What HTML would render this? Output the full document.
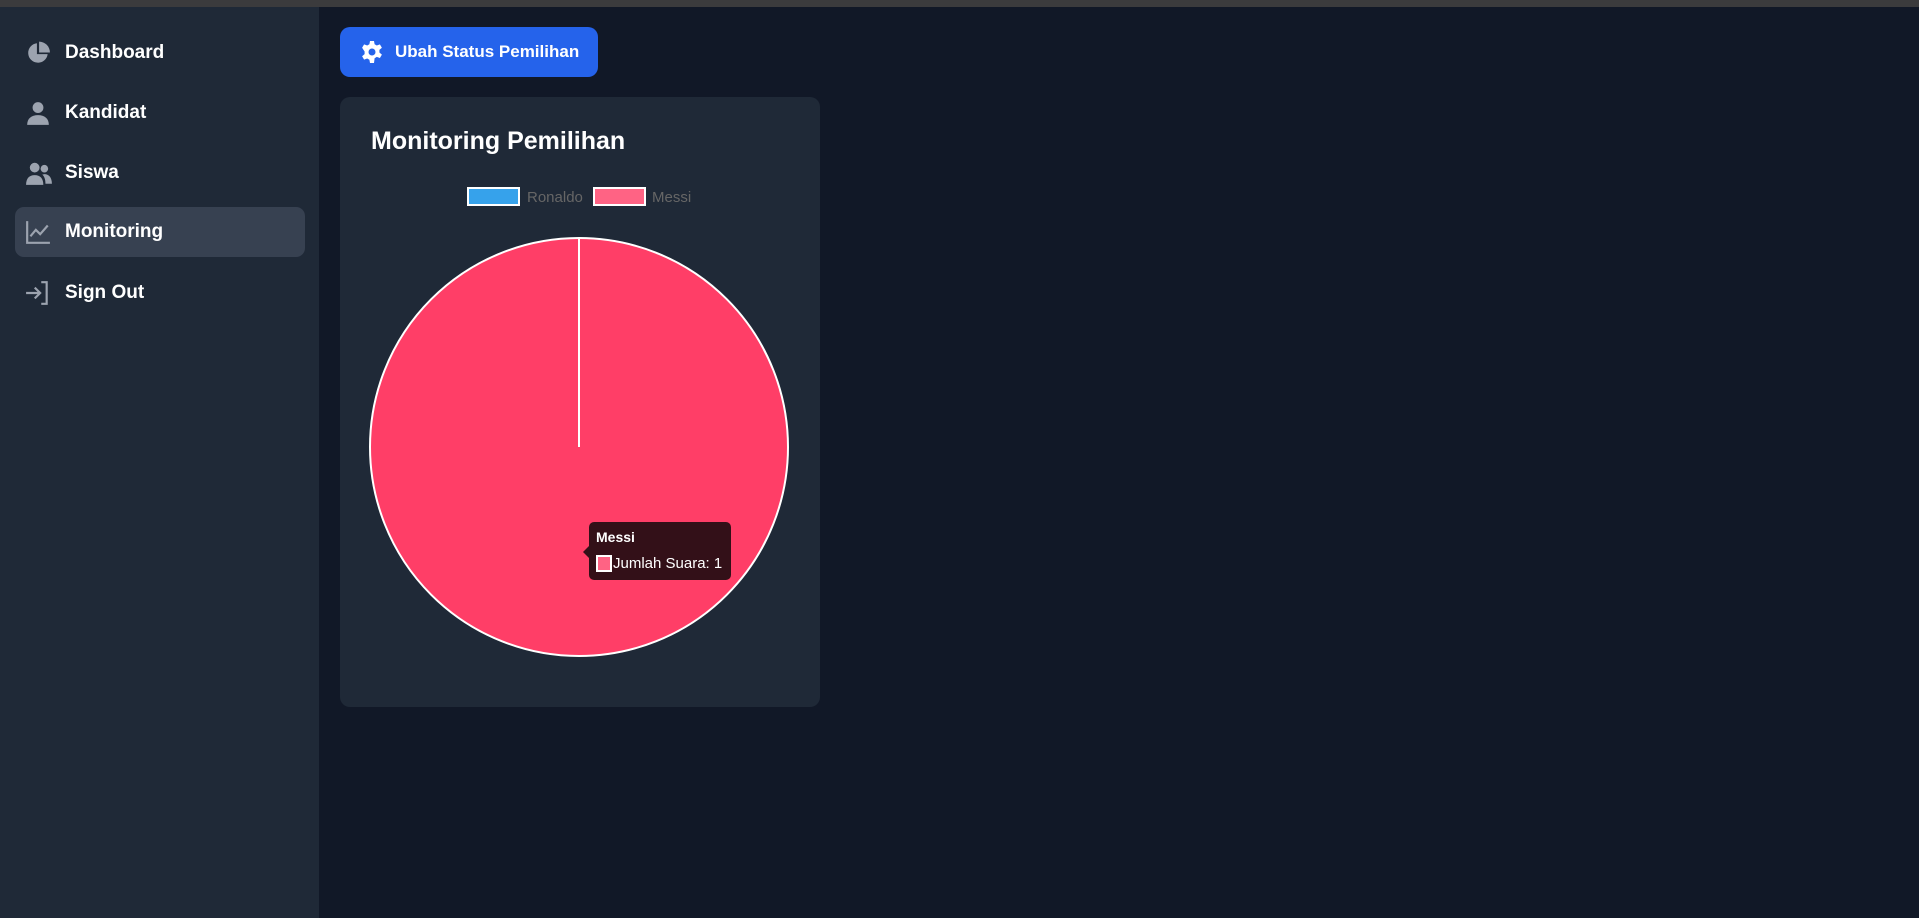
<!DOCTYPE html>
<html><head><meta charset="utf-8"><style>
*{margin:0;padding:0;box-sizing:border-box}
body{width:1919px;height:918px;background:#111827;font-family:"Liberation Sans",sans-serif;position:relative;overflow:hidden}
.top{position:absolute;left:0;top:0;width:1919px;height:7px;background:#3b3b3d}
.side{position:absolute;left:0;top:7px;width:319px;height:911px;background:#1f2937}
.nav{position:absolute;left:15px;width:290px;height:50px;border-radius:9px;color:#fff;font-size:19px;font-weight:bold;display:flex;align-items:center}
.nav span{position:absolute;left:50px}
.nav svg{position:absolute;left:10px;top:12px}
.active{background:#374151}
.btn{position:absolute;left:340px;top:27px;width:258px;height:50px;background:#2563eb;border-radius:10px;color:#fff;font-size:17px;font-weight:bold}
.btn span{position:absolute;left:55px;top:15px}
.card{position:absolute;left:340px;top:97px;width:480px;height:610px;background:#1f2937;border-radius:10px}
</style></head><body>
<div class="top"></div>
<div class="side"></div>
<div class="nav" style="top:28px"><svg width="26" height="26" viewBox="0 0 24 24" fill="#9ca3af"><path d="M11 3a9 9 0 1 0 9.9 10H11z"/><path d="M13 1.5v10h10A10 10 0 0 0 13 1.5z"/></svg><span>Dashboard</span></div>
<div class="nav" style="top:88px"><svg width="26" height="26" viewBox="0 0 24 24" fill="#9ca3af"><circle cx="12" cy="7" r="5"/><path d="M2 23c0-6 4-9 10-9s10 3 10 9z"/></svg><span>Kandidat</span></div>
<div class="nav" style="top:148px"><svg width="28" height="26" viewBox="0 0 26 24" fill="#9ca3af"><circle cx="9" cy="7" r="4.5"/><circle cx="18" cy="8" r="3.5"/><path d="M1 23c0-6 3-9 8-9s8 3 8 9z"/><path d="M18 13c4 0 7 3 7 9h-6c0-4-1-7-3-8.5z"/></svg><span>Siswa</span></div>
<div class="nav active" style="top:207px"><svg width="26" height="26" viewBox="0 0 24 24" fill="none" stroke="#9ca3af" stroke-width="2"><path d="M2 2v20h21"/><path d="M5 16l5-6 4 4 7-8"/></svg><span>Monitoring</span></div>
<div class="nav" style="top:268px"><svg width="26" height="26" viewBox="0 0 24 24" fill="none" stroke="#9ca3af" stroke-width="2"><path d="M15 2h5v20h-5"/><path d="M1 12h13M9 7l5 5-5 5"/></svg><span>Sign Out</span></div>
<div class="btn"><svg style="position:absolute;left:20px;top:13px" width="24" height="24" viewBox="0 0 24 24"><path fill="#fff" d="M10 1h4l.6 3.2 2.2 1.3 3.1-1.1 2 3.4-2.5 2.1v2.6l2.5 2.1-2 3.4-3.1-1.1-2.2 1.3L14 23h-4l-.6-3.2-2.2-1.3-3.1 1.1-2-3.4 2.5-2.1v-2.6L2.1 7.8l2-3.4 3.1 1.1 2.2-1.3z"/><circle cx="12" cy="12" r="3.5" fill="#2563eb"/></svg><span>Ubah Status Pemilihan</span></div>
<div class="card">
<div style="position:absolute;left:31px;top:30px;color:#fff;font-size:25px;font-weight:bold">Monitoring Pemilihan</div>
</div>
<svg style="position:absolute;left:0;top:0" width="1919" height="918">
<rect x="468" y="188" width="51" height="17" fill="#36a2eb" stroke="#fff" stroke-width="2"/>
<text x="527" y="202" fill="#666" font-size="15" font-family="Liberation Sans">Ronaldo</text>
<rect x="594" y="188" width="51" height="17" fill="#ff6384" stroke="#fff" stroke-width="2"/>
<text x="652" y="202" fill="#666" font-size="15" font-family="Liberation Sans">Messi</text>
<circle cx="579" cy="447" r="209" fill="#ff3e67" stroke="#fff" stroke-width="2"/>
<line x1="579" y1="238" x2="579" y2="447" stroke="#fff" stroke-width="2"/>
<rect x="589" y="522" width="142" height="58" rx="5" fill="#331018"/>
<path d="M589 546l-6 6 6 6z" fill="#331018"/>
<text x="596" y="542" fill="#fff" font-size="14" font-weight="bold" font-family="Liberation Sans">Messi</text>
<rect x="597" y="556" width="14" height="15" fill="#ff6384" stroke="#fff" stroke-width="2"/>
<text x="613" y="568" fill="#fff" font-size="15" font-family="Liberation Sans">Jumlah Suara: 1</text>
</svg>
</body></html>
